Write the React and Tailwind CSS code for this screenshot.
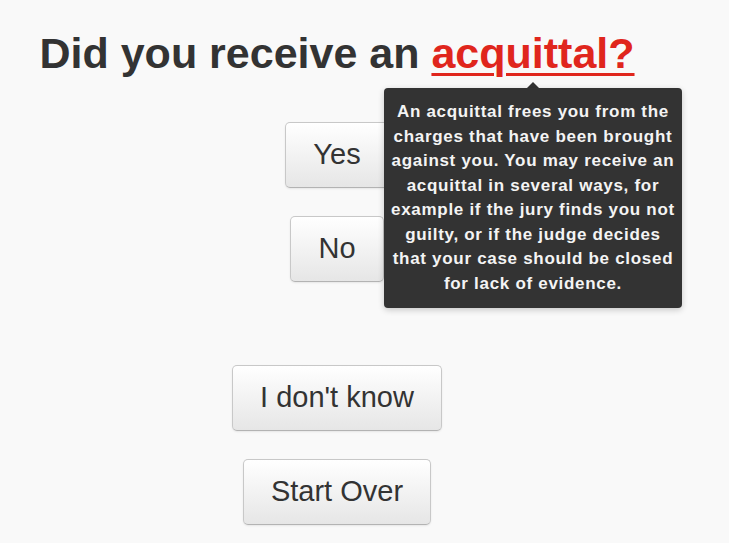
import React from 'react'

const BTN =
  'px-[27px] h-[66px] text-[29px] text-[#333] rounded-[5px] border border-[#c8c8c8] border-b-[#b3b3b3] bg-gradient-to-b from-white to-[#e6e6e6] shadow-[inset_0_1px_0_rgba(255,255,255,0.4),0_1px_2px_rgba(0,0,0,0.08)]'

const TIP_LINES = [
  'An acquittal frees you from the',
  'charges that have been brought',
  'against you. You may receive an',
  'acquittal in several ways, for',
  'example if the jury finds you not',
  'guilty, or if the judge decides',
  'that your case should be closed',
  'for lack of evidence.',
]

function Tooltip() {
  return (
    <div className="absolute left-1/2 -translate-x-1/2 top-full mt-[5px] w-[298px] z-10 whitespace-nowrap">
      <div className="mx-auto w-0 h-0 border-x-[6px] border-x-transparent border-b-[6px] border-b-[#333]" />
      <div className="bg-[#333] rounded-[4px] py-[12px] text-[#f4f4f4] text-[17px] font-bold leading-[24.5px] tracking-[0.7px] text-center shadow-[0_2px_6px_rgba(0,0,0,0.2)]">
        {TIP_LINES.map(l => (
          <span key={l} className="block">{l}</span>
        ))}
      </div>
    </div>
  )
}

export default function App() {
  return (
    <div className="min-h-screen bg-[#f9f9f9]" style={{ fontFamily: '"Liberation Sans", Arial, Helvetica, sans-serif' }}>
      <div className="w-[674px] flex flex-col items-center pt-[26px]">
        <h1 className="text-[43px] font-bold text-[#333] leading-[54px] whitespace-nowrap">
          Did you receive an{' '}
          <span className="relative">
            <a href="#" className="text-[#e0261d] underline decoration-[3px] underline-offset-[5px]">acquittal?</a>
            <Tooltip />
          </span>
        </h1>

        <div className="mt-[42px] flex flex-col items-center gap-[28px]">
          <button className={BTN}>Yes</button>
          <button className={BTN}>No</button>
        </div>

        <div className="mt-[83px] flex flex-col items-center gap-[28px]">
          <button className={BTN}>I don't know</button>
          <button className={BTN}>Start Over</button>
        </div>
      </div>
    </div>
  )
}
